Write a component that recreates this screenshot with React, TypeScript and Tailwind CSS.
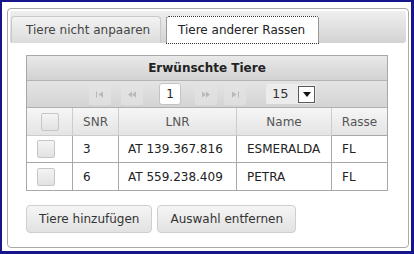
import React from "react";

const rows = [
  { snr: "3", lnr: "AT 139.367.816", name: "ESMERALDA", rasse: "FL" },
  { snr: "6", lnr: "AT 559.238.409", name: "PETRA", rasse: "FL" },
];

function PagerIcon({ kind }: { kind: "first" | "prev" | "next" | "last" }) {
  return (
    <svg width="10" height="7" viewBox="0 0 10 7" className="text-[#b8b8b8]">
      {kind === "first" && (
        <>
          <rect x="1" y="0.5" width="1" height="6" fill="currentColor" />
          <path d="M8 0.5 L3.5 3.5 L8 6.5 Z" fill="currentColor" />
        </>
      )}
      {kind === "prev" && (
        <>
          <path d="M5 0.5 L1 3.5 L5 6.5 Z" fill="currentColor" />
          <path d="M9 0.5 L5 3.5 L9 6.5 Z" fill="currentColor" />
        </>
      )}
      {kind === "next" && (
        <>
          <path d="M1 0.5 L5 3.5 L1 6.5 Z" fill="currentColor" />
          <path d="M5 0.5 L9 3.5 L5 6.5 Z" fill="currentColor" />
        </>
      )}
      {kind === "last" && (
        <>
          <path d="M2 0.5 L6.5 3.5 L2 6.5 Z" fill="currentColor" />
          <rect x="8" y="0.5" width="1" height="6" fill="currentColor" />
        </>
      )}
    </svg>
  );
}

function PagerButton({ kind, className }: { kind: "first" | "prev" | "next" | "last"; className?: string }) {
  return (
    <span className={`flex h-[22px] w-[22px] items-center justify-center rounded-[2px] bg-[#e2e2e2]/70 ${className ?? ""}`}>
      <PagerIcon kind={kind} />
    </span>
  );
}

function Checkbox() {
  return (
    <span className="block h-[18px] w-[18px] rounded-[2px] border border-[#c6c6c6] bg-gradient-to-b from-[#f4f4f4] to-[#e2e2e2]" />
  );
}

export default function App() {
  return (
    <div
      className="h-[254px] w-[414px] overflow-hidden border-t-2 border-r-[3px] border-b-[3px] border-l-2 border-[#16168a] bg-white pt-[6px] pl-[5px] text-[12px] text-[#333]"
      style={{ fontFamily: '"DejaVu Sans", Verdana, sans-serif' }}
    >
      <div className="h-[240px] w-[402px] rounded-[4px] border border-[#a9a9a9] p-[2px]">
        {/* tabs */}
        <div className="flex h-[32px] items-end gap-[5px] rounded-[3px] bg-gradient-to-b from-[#efefef] to-[#d3d3d3] pl-[1px]">
          <div className="flex h-[27px] w-[150px] items-center rounded-t-[4px] border border-b-0 border-[#c9c9c9] bg-gradient-to-b from-[#f3f3f3] to-[#dcdcdc] pl-[14px] text-[#444]">
            Tiere nicht anpaaren
          </div>
          <div className="relative -mb-px flex h-[28px] w-[153px] items-center rounded-t-[3px] bg-white pl-[12px] text-[#222]">
            <span className="absolute inset-0 rounded-t-[3px] border border-dotted border-[#333]" />
            Tiere anderer Rassen
          </div>
        </div>

        {/* content */}
        <div className="pt-[12px] pl-[16px]">
          <div className="w-[362px] border border-[#a8a8a8]">
            <div className="flex h-[25px] items-center justify-center border-b border-[#b4b4b4] bg-gradient-to-b from-[#e9e9e9] to-[#d2d2d2] font-bold text-[#222]">
              Erwünschte Tiere
            </div>
            <div className="flex h-[27px] items-center border-b border-[#b0b0b0] bg-gradient-to-b from-[#e4e4e4] to-[#d4d4d4] pl-[62px]">
              <PagerButton kind="first" />
              <PagerButton kind="prev" className="ml-[10px]" />
              <span className="ml-[16px] flex h-[22px] w-[22px] items-center justify-center rounded-[3px] border border-[#c4c4c4] bg-white text-[#222]">
                1
              </span>
              <PagerButton kind="next" className="ml-[14px]" />
              <PagerButton kind="last" className="ml-[7px]" />
              <span className="ml-[20px] flex h-[20px] w-[50px] items-center justify-between rounded-[2px] bg-[#ececec] pl-[6px] pr-[1px]">
                <span className="text-[13px] text-[#333]">15</span>
                <span className="flex h-[17px] w-[17px] items-center justify-center border border-[#5a5a5a] bg-white">
                  <svg width="8" height="5" viewBox="0 0 8 5">
                    <path d="M0 0 L8 0 L4 5 Z" fill="#111" />
                  </svg>
                </span>
              </span>
            </div>
            <div className="grid grid-cols-[46px_46px_118px_95px_1fr]">
              <div className="flex h-[28px] items-center justify-center border-r border-b border-[#cccccc] bg-gradient-to-b from-[#f6f6f6] to-[#e4e4e4]">
                <Checkbox />
              </div>
              <div className="flex h-[28px] items-center justify-center border-r border-b border-[#cccccc] bg-gradient-to-b from-[#f6f6f6] to-[#e4e4e4] text-[#555]">
                SNR
              </div>
              <div className="flex h-[28px] items-center justify-center border-r border-b border-[#cccccc] bg-gradient-to-b from-[#f6f6f6] to-[#e4e4e4] text-[#555]">
                LNR
              </div>
              <div className="flex h-[28px] items-center justify-center border-r border-b border-[#cccccc] bg-gradient-to-b from-[#f6f6f6] to-[#e4e4e4] text-[#555]">
                Name
              </div>
              <div className="flex h-[28px] items-center justify-center border-b border-[#a8a8a8] bg-gradient-to-b from-[#f6f6f6] to-[#e4e4e4] text-[#555]">
                Rasse
              </div>
              {rows.map((r, i) => {
                const bb = i < rows.length - 1 ? "border-b border-[#a8a8a8]" : "";
                return (
                  <React.Fragment key={r.snr}>
                    <div className={`flex h-[27px] items-center border-r border-[#a8a8a8] pl-[10px] ${bb}`}>
                      <Checkbox />
                    </div>
                    <div className={`flex h-[27px] items-center border-r border-[#a8a8a8] pl-[10px] text-[#222] ${bb}`}>
                      {r.snr}
                    </div>
                    <div className={`flex h-[27px] items-center border-r border-[#a8a8a8] pl-[9px] text-[#222] ${bb}`}>
                      {r.lnr}
                    </div>
                    <div className={`flex h-[27px] items-center border-r border-[#a8a8a8] pl-[10px] text-[#222] ${bb}`}>
                      {r.name}
                    </div>
                    <div className={`flex h-[27px] items-center pl-[10px] text-[#222] ${bb}`}>
                      {r.rasse}
                    </div>
                  </React.Fragment>
                );
              })}
            </div>
          </div>

          <div className="mt-[14px] flex gap-[5px]">
            <button className="h-[28px] rounded-[4px] border border-[#cfcfcf] bg-gradient-to-b from-[#f5f5f5] to-[#e2e2e2] px-[12px] text-[#333]">
              Tiere hinzufügen
            </button>
            <button className="h-[28px] rounded-[4px] border border-[#cfcfcf] bg-gradient-to-b from-[#f5f5f5] to-[#e2e2e2] px-[12px] text-[#333]">
              Auswahl entfernen
            </button>
          </div>
        </div>
      </div>
    </div>
  );
}
